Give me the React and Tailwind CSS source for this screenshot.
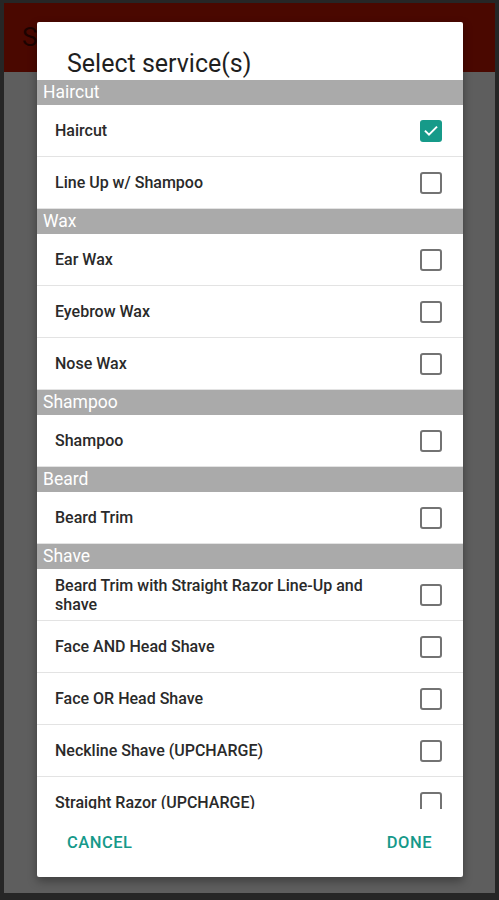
import { useState } from "react";

const sections = [
  { title: "Haircut", items: ["Haircut", "Line Up w/ Shampoo"] },
  { title: "Wax", items: ["Ear Wax", "Eyebrow Wax", "Nose Wax"] },
  { title: "Shampoo", items: ["Shampoo"] },
  { title: "Beard", items: ["Beard Trim"] },
  {
    title: "Shave",
    items: [
      "Beard Trim with Straight Razor Line-Up and shave",
      "Face AND Head Shave",
      "Face OR Head Shave",
      "Neckline Shave (UPCHARGE)",
      "Straight Razor (UPCHARGE)",
    ],
  },
];

const CheckBox = ({ checked }) =>
  checked ? (
    <div className="w-[22px] h-[22px] rounded-[3px] bg-[#169a89] flex items-center justify-center">
      <svg width="16" height="16" viewBox="0 0 24 24" fill="none">
        <path d="M4 12.5l5 5L20 6.5" stroke="#fff" strokeWidth="3" strokeLinecap="square" />
      </svg>
    </div>
  ) : (
    <div className="w-[22px] h-[22px] rounded-[3px] border-2 border-[#737373]" />
  );

const Row = ({ label, checked, onToggle }) => (
  <div
    className="h-[52px] flex items-center border-b border-[#e3e3e3] pl-[18px] pr-[21px] cursor-pointer"
    onClick={onToggle}
  >
    <div className="flex-1 pr-[30px] text-[16px] leading-[19px] text-[#2a2a2a] font-medium">{label}</div>
    <CheckBox checked={checked} />
  </div>
);

export default function App() {
  const [selected, setSelected] = useState(["Haircut"]);

  const toggle = (name) => {
    if (selected.includes(name)) {
      setSelected(selected.filter((s) => s !== name));
    } else {
      setSelected([...selected, name]);
    }
  };

  return (
    <div className="w-[499px] h-[900px] bg-[#262626] pt-[3px] pl-[4px] pr-[4px] pb-[7px] font-['Roboto',sans-serif]">
      <div className="relative h-full flex flex-col bg-[#5e5e5e]">
        {/* app bar under the dim overlay */}
        <div className="h-[69px] bg-[#4a0800] flex items-center pl-[18px] text-[26px] text-[#1c0300]">
          S
        </div>
        <div className="flex-1" />

        {/* dialog */}
        <div className="absolute left-[33px] top-[19px] w-[426px] h-[855px] bg-white rounded-[2px] shadow-[0_4px_10px_rgba(0,0,0,0.35)] flex flex-col overflow-hidden">
          <div className="h-[58px] pl-[30px] pt-[27px] text-[25px] leading-[30px] text-[#1f1f1f]">
            Select service(s)
          </div>
          <div className="h-[729px] overflow-hidden">
            {sections.map((sec) => (
              <div key={sec.title}>
                <div className="h-[25px] bg-[#aaaaaa] pl-[6px] text-[17.5px] leading-[25px] text-white">
                  {sec.title}
                </div>
                {sec.items.map((item) => (
                  <Row
                    key={item}
                    label={item}
                    checked={selected.includes(item)}
                    onToggle={() => toggle(item)}
                  />
                ))}
              </div>
            ))}
          </div>
          <div className="flex-1 flex items-center justify-between pl-[30px] pr-[31px] text-[16.5px] font-medium tracking-[0.5px] text-[#16998a]">
            <button>CANCEL</button>
            <button>DONE</button>
          </div>
        </div>
      </div>
    </div>
  );
}
